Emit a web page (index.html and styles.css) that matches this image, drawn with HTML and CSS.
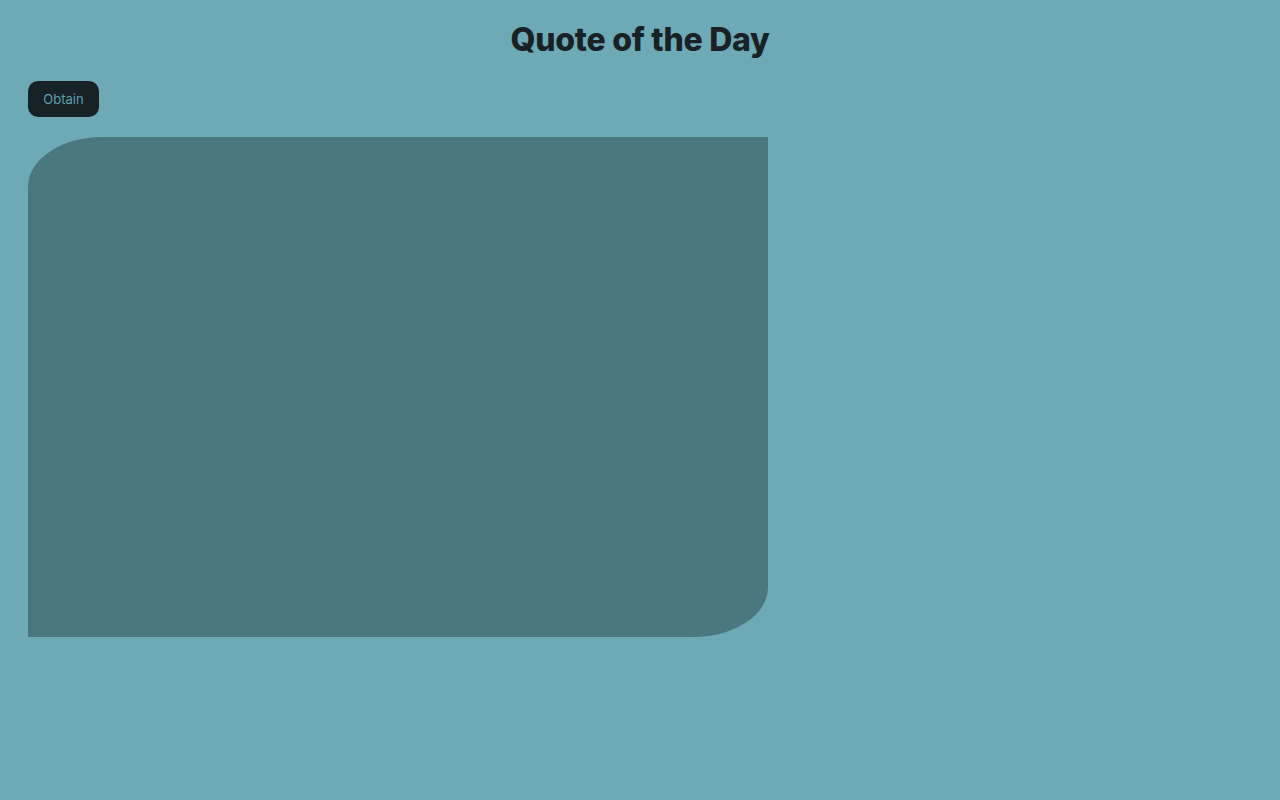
FILE: index.html
```html
<!DOCTYPE html>
<html lang="en">
<head>
<meta charset="utf-8">
<title>Quote of the Day</title>
<link rel="stylesheet" href="styles.css">
</head>
<body>
<main class="page">
  <h1 class="title">Quote of the Day</h1>
  <div class="actions">
    <button class="obtain" type="button">Obtain</button>
  </div>
  <section class="quote-card"></section>
</main>
</body>
</html>
```
FILE: styles.css
```css
html, body {
  margin: 0;
  padding: 0;
  background: #6eaab5;
  font-family: Inter, "Noto Sans", sans-serif;
}
.page {
  padding: 0 28px;
}
.title {
  margin: 0;
  padding-top: 20px;
  text-align: center;
  font-size: 32px;
  line-height: 40px;
  font-weight: 800;
  letter-spacing: -0.25px;
  color: #182226;
}
.actions {
  margin-top: 21px;
  display: flex;
}
.obtain {
  width: 71px;
  height: 36px;
  border: none;
  border-radius: 10px;
  background: #172226;
  color: #5e9fb0;
  font-family: Inter, "Noto Sans", sans-serif;
  font-size: 13px;
  padding: 0;
}
.quote-card {
  margin-top: 20px;
  width: 740px;
  height: 500px;
  background: #4b7780;
  border-radius: 10% 0 / 10% 0;
}
```
